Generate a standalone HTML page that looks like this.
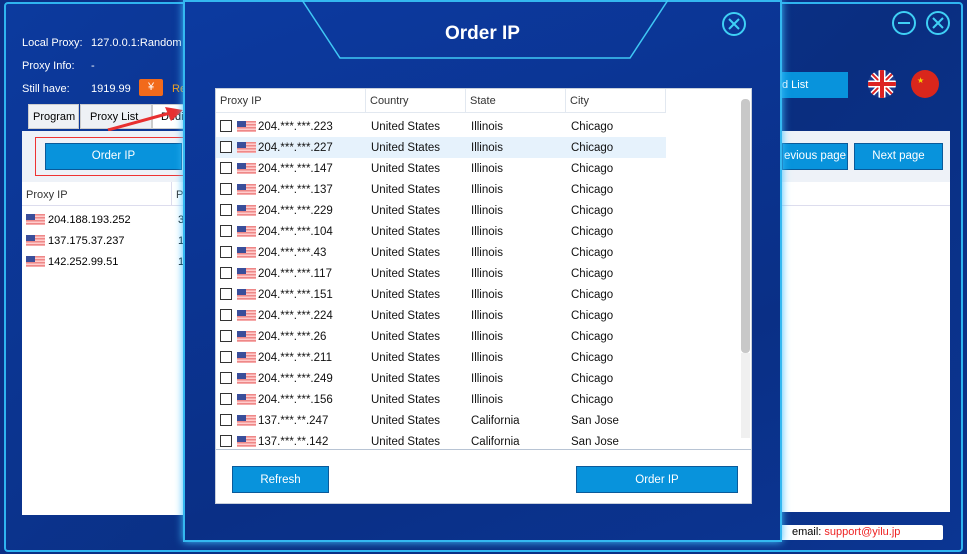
<!DOCTYPE html>
<html><head><meta charset="utf-8"><style>
*{margin:0;padding:0;box-sizing:border-box}
body{width:967px;height:554px;overflow:hidden;background:#0b2f86;font-family:"Liberation Sans",sans-serif;font-size:11px;position:relative}
.abs{position:absolute}
.w{color:#fff}
.btn{position:absolute;background:#0893dc;border:1px solid #0a5a9a;color:#fff;font-size:11.5px;text-align:center}
.flag{position:absolute;width:19px;height:11px;background:repeating-linear-gradient(#e88 0 1.5px,#fcc 1.5px 3px)}
.flag:before{content:"";position:absolute;left:0;top:0;width:9px;height:6px;background:#3a4e9a}
.cb{position:absolute;width:12px;height:12px;border:1px solid #333;background:#fff}
.row{position:absolute;left:0;width:526px;height:21px;color:#111;font-size:11.5px}
.row span{position:absolute;top:5px}
</style></head><body>
<div class="abs" style="left:4px;top:2px;width:959px;height:550px;background:linear-gradient(135deg,#0c3a9e,#0a2e80 60%,#0b3592);border:2px solid #2fb4f0;border-radius:4px"></div>
<div class="abs w" style="left:22px;top:37px">Local Proxy:</div><div class="abs w" style="left:91px;top:37px">127.0.0.1:Random</div>
<div class="abs w" style="left:22px;top:60px">Proxy Info:</div><div class="abs w" style="left:91px;top:60px">-</div>
<div class="abs w" style="left:22px;top:83px">Still have:</div><div class="abs w" style="left:91px;top:83px">1919.99</div>
<div class="abs" style="left:139px;top:79px;width:24px;height:17px;background:#f26a1b;color:#fff;font-size:11px;text-align:center;line-height:17px;border-radius:2px">¥</div>
<div class="abs" style="left:172px;top:83px;color:#f0a020">Re</div>
<div class="abs" style="left:28px;top:104px;width:51px;height:25px;background:#eef1f5;border:1px solid #ccc;padding:6px 4px">Program</div>
<div class="abs" style="left:80px;top:104px;width:72px;height:25px;background:#eef1f5;border:1px solid #ccc;padding:6px 9px">Proxy List</div>
<div class="abs" style="left:152px;top:104px;width:32px;height:25px;background:#fff;border:1px solid #ccc;padding:6px 8px">Dedi</div>
<svg class="abs" style="left:105px;top:105px" width="80" height="30"><path d="M3 25 L65 8" stroke="#e83030" stroke-width="3"/><path d="M60 2 L78 5 L66 16Z" fill="#e83030"/></svg>
<div class="abs" style="left:22px;top:131px;width:162px;height:51px;background:#eef2f8"></div>
<div class="abs" style="left:35px;top:137px;width:151px;height:39px;border:1px solid #e33"></div>
<div class="btn" style="left:45px;top:143px;width:137px;height:27px;line-height:25px">Order IP</div>
<div class="abs" style="left:22px;top:182px;width:162px;height:333px;background:#fff"></div>
<div class="abs" style="left:22px;top:182px;width:162px;height:24px;border-bottom:1px solid #dde;"></div>
<div class="abs" style="left:26px;top:189px;color:#333">Proxy IP</div>
<div class="abs" style="left:171px;top:182px;width:1px;height:24px;background:#dde"></div>
<div class="abs" style="left:176px;top:189px;color:#333">P</div>
<div class="flag" style="left:26px;top:214px"></div><div class="abs" style="left:48px;top:214px">204.188.193.252</div><div class="abs" style="left:178px;top:214px">3</div>
<div class="flag" style="left:26px;top:235px"></div><div class="abs" style="left:48px;top:235px">137.175.37.237</div><div class="abs" style="left:178px;top:235px">1</div>
<div class="flag" style="left:26px;top:256px"></div><div class="abs" style="left:48px;top:256px">142.252.99.51</div><div class="abs" style="left:178px;top:256px">1</div>
<div class="abs" style="left:782px;top:72px;width:66px;height:26px;background:#0893dc;color:#fff;padding:7px 0 0 0">d List</div>
<svg class="abs" style="left:868px;top:70px" width="28" height="28"><defs><clipPath id="c"><circle cx="14" cy="14" r="14"/></clipPath></defs><g clip-path="url(#c)"><rect width="28" height="28" fill="#1b3a8c"/><path d="M0 0L28 28M28 0L0 28" stroke="#fff" stroke-width="5"/><path d="M0 0L28 28M28 0L0 28" stroke="#d22" stroke-width="2"/><path d="M14 0V28M0 14H28" stroke="#fff" stroke-width="7"/><path d="M14 0V28M0 14H28" stroke="#d22" stroke-width="4"/></g></svg>
<svg class="abs" style="left:911px;top:70px" width="28" height="28"><circle cx="14" cy="14" r="14" fill="#d9261c"/><text x="6" y="13" font-size="8" fill="#f5d400">★</text></svg>
<svg class="abs" style="left:890px;top:10px" width="64" height="28"><circle cx="14" cy="13" r="11" fill="none" stroke="#3fd0f5" stroke-width="2"/><path d="M8 13H20" stroke="#3fd0f5" stroke-width="2"/><circle cx="48" cy="13" r="11" fill="none" stroke="#3fd0f5" stroke-width="2"/><path d="M43 8L53 18M53 8L43 18" stroke="#3fd0f5" stroke-width="2"/></svg>
<div class="abs" style="left:782px;top:131px;width:168px;height:51px;background:#eef2f8"></div>
<div class="btn" style="left:782px;top:143px;width:66px;height:27px;line-height:25px">evious page</div>
<div class="btn" style="left:854px;top:143px;width:89px;height:27px;line-height:25px">Next page</div>
<div class="abs" style="left:782px;top:182px;width:168px;height:330px;background:#fff"></div>
<div class="abs" style="left:782px;top:182px;width:168px;height:24px;border-bottom:1px solid #dde"></div>
<div class="abs" style="left:780px;top:525px;width:163px;height:15px;background:#fff;border-radius:2px;padding:1px 0 0 12px;font-size:11px">email: <span style="color:#e22">support@yilu.jp</span></div>
<div class="abs" style="left:183px;top:0;width:599px;height:542px;background:linear-gradient(160deg,#0c3aa0,#0a2f86 70%,#0b3490);border:2px solid #34b8f0;box-shadow:0 0 8px #3fc0ff"></div>
<svg class="abs" style="left:300px;top:0" width="370" height="62"><path d="M2 0 L40 58 H330 L368 0" fill="none" stroke="#3fc8f5" stroke-width="1.5"/></svg>
<div class="abs w" style="left:183px;top:23px;width:599px;text-align:center;font-size:19px;font-weight:bold">Order IP</div>
<svg class="abs" style="left:721px;top:11px" width="28" height="28"><circle cx="13" cy="13" r="11" fill="none" stroke="#3fd0f5" stroke-width="2"/><path d="M8 8L18 18M18 8L8 18" stroke="#3fd0f5" stroke-width="2"/></svg>
<div class="abs" style="left:215px;top:88px;width:537px;height:416px;background:#fff;border:1px solid #c8d0dc"></div>
<div class="abs" style="left:216px;top:89px;width:450px;height:24px;border-bottom:1px solid #e2e8f0"></div>
<div class="abs" style="left:220px;top:95px;color:#333">Proxy IP</div>
<div class="abs" style="left:365px;top:89px;width:1px;height:24px;background:#e2e8f0"></div><div class="abs" style="left:370px;top:95px;color:#333">Country</div>
<div class="abs" style="left:465px;top:89px;width:1px;height:24px;background:#e2e8f0"></div><div class="abs" style="left:470px;top:95px;color:#333">State</div>
<div class="abs" style="left:565px;top:89px;width:1px;height:24px;background:#e2e8f0"></div><div class="abs" style="left:570px;top:95px;color:#333">City</div>
<div class="abs" style="left:665px;top:89px;width:1px;height:24px;background:#e2e8f0"></div>
<div class="abs" style="left:741px;top:99px;width:9px;height:254px;background:#c8c8c8;border-radius:4px"></div>
<div class="abs" style="left:741px;top:353px;width:9px;height:85px;background:#f0f0f0"></div>
<div class="abs" style="left:216px;top:116px;width:526px;height:334px;overflow:hidden">
<div class="row" style="top:0"><div class="cb" style="left:4px;top:4px"></div><div class="flag" style="left:21px;top:5px"></div><span style="left:42px">204.***.***.223</span><span style="left:155px">United States</span><span style="left:255px">Illinois</span><span style="left:355px">Chicago</span></div>
<div class="row" style="top:21px;width:450px;background:#e6f2fc"><div class="cb" style="left:4px;top:4px"></div><div class="flag" style="left:21px;top:5px"></div><span style="left:42px">204.***.***.227</span><span style="left:155px">United States</span><span style="left:255px">Illinois</span><span style="left:355px">Chicago</span></div>
<div class="row" style="top:42px"><div class="cb" style="left:4px;top:4px"></div><div class="flag" style="left:21px;top:5px"></div><span style="left:42px">204.***.***.147</span><span style="left:155px">United States</span><span style="left:255px">Illinois</span><span style="left:355px">Chicago</span></div>
<div class="row" style="top:63px"><div class="cb" style="left:4px;top:4px"></div><div class="flag" style="left:21px;top:5px"></div><span style="left:42px">204.***.***.137</span><span style="left:155px">United States</span><span style="left:255px">Illinois</span><span style="left:355px">Chicago</span></div>
<div class="row" style="top:84px"><div class="cb" style="left:4px;top:4px"></div><div class="flag" style="left:21px;top:5px"></div><span style="left:42px">204.***.***.229</span><span style="left:155px">United States</span><span style="left:255px">Illinois</span><span style="left:355px">Chicago</span></div>
<div class="row" style="top:105px"><div class="cb" style="left:4px;top:4px"></div><div class="flag" style="left:21px;top:5px"></div><span style="left:42px">204.***.***.104</span><span style="left:155px">United States</span><span style="left:255px">Illinois</span><span style="left:355px">Chicago</span></div>
<div class="row" style="top:126px"><div class="cb" style="left:4px;top:4px"></div><div class="flag" style="left:21px;top:5px"></div><span style="left:42px">204.***.***.43</span><span style="left:155px">United States</span><span style="left:255px">Illinois</span><span style="left:355px">Chicago</span></div>
<div class="row" style="top:147px"><div class="cb" style="left:4px;top:4px"></div><div class="flag" style="left:21px;top:5px"></div><span style="left:42px">204.***.***.117</span><span style="left:155px">United States</span><span style="left:255px">Illinois</span><span style="left:355px">Chicago</span></div>
<div class="row" style="top:168px"><div class="cb" style="left:4px;top:4px"></div><div class="flag" style="left:21px;top:5px"></div><span style="left:42px">204.***.***.151</span><span style="left:155px">United States</span><span style="left:255px">Illinois</span><span style="left:355px">Chicago</span></div>
<div class="row" style="top:189px"><div class="cb" style="left:4px;top:4px"></div><div class="flag" style="left:21px;top:5px"></div><span style="left:42px">204.***.***.224</span><span style="left:155px">United States</span><span style="left:255px">Illinois</span><span style="left:355px">Chicago</span></div>
<div class="row" style="top:210px"><div class="cb" style="left:4px;top:4px"></div><div class="flag" style="left:21px;top:5px"></div><span style="left:42px">204.***.***.26</span><span style="left:155px">United States</span><span style="left:255px">Illinois</span><span style="left:355px">Chicago</span></div>
<div class="row" style="top:231px"><div class="cb" style="left:4px;top:4px"></div><div class="flag" style="left:21px;top:5px"></div><span style="left:42px">204.***.***.211</span><span style="left:155px">United States</span><span style="left:255px">Illinois</span><span style="left:355px">Chicago</span></div>
<div class="row" style="top:252px"><div class="cb" style="left:4px;top:4px"></div><div class="flag" style="left:21px;top:5px"></div><span style="left:42px">204.***.***.249</span><span style="left:155px">United States</span><span style="left:255px">Illinois</span><span style="left:355px">Chicago</span></div>
<div class="row" style="top:273px"><div class="cb" style="left:4px;top:4px"></div><div class="flag" style="left:21px;top:5px"></div><span style="left:42px">204.***.***.156</span><span style="left:155px">United States</span><span style="left:255px">Illinois</span><span style="left:355px">Chicago</span></div>
<div class="row" style="top:294px"><div class="cb" style="left:4px;top:4px"></div><div class="flag" style="left:21px;top:5px"></div><span style="left:42px">137.***.**.247</span><span style="left:155px">United States</span><span style="left:255px">California</span><span style="left:355px">San Jose</span></div>
<div class="row" style="top:315px"><div class="cb" style="left:4px;top:4px"></div><div class="flag" style="left:21px;top:5px"></div><span style="left:42px">137.***.**.142</span><span style="left:155px">United States</span><span style="left:255px">California</span><span style="left:355px">San Jose</span></div>
</div>
<div class="abs" style="left:216px;top:449px;width:535px;height:1px;background:#b8c4d4"></div>
<div class="btn" style="left:232px;top:466px;width:97px;height:27px;line-height:27px">Refresh</div>
<div class="btn" style="left:576px;top:466px;width:162px;height:27px;line-height:27px">Order IP</div>
</body></html>
